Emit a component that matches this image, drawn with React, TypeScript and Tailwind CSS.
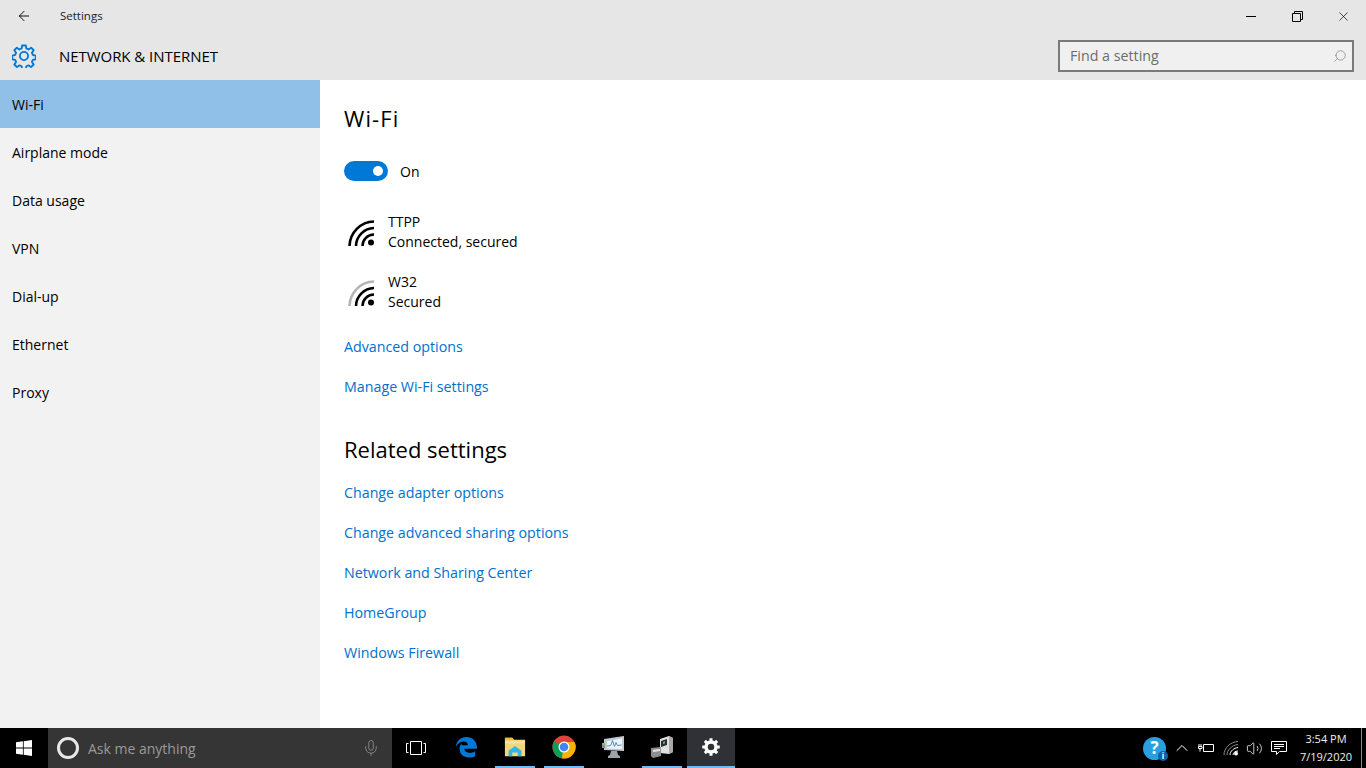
import { ArrowLeft, Mic, Search, X, ChevronUp, Volume2 } from "lucide-react";

const navItems = ["Wi-Fi", "Airplane mode", "Data usage", "VPN", "Dial-up", "Ethernet", "Proxy"];
const relatedLinks = [
  "Change adapter options",
  "Change advanced sharing options",
  "Network and Sharing Center",
  "HomeGroup",
  "Windows Firewall",
];

const FONT = "font-['Open_Sans','Noto_Sans',sans-serif]";

function GearIcon({ className }: { className?: string }) {
  return (
    <svg viewBox="0 0 26 26" className={className} fill="none" stroke="currentColor" strokeWidth="2">
      <circle cx="13" cy="13" r="4.4" />
      <path
        d="M11 1.600h4l.6 3.300 2.300 1 2.800-1.900 2.800 2.800-1.900 2.800 1 2.300 3.200.6v4l-3.200.6-1 2.300 1.900 2.800-2.800 2.800-2.800-1.900-2.300 1-.6 3.200h-4l-.6-3.200-2.300-1-2.800 1.900-2.800-2.800 1.900-2.800-1-2.300-3.200-.6v-4l3.200-.6 1-2.300-1.900-2.800 2.800-2.800 2.800 1.900 2.300-1z"
        strokeLinejoin="round"
      />
    </svg>
  );
}

function WifiIcon({ weak }: { weak?: boolean }) {
  return (
    <svg viewBox="0 0 28 28" className="w-7 h-7 ml-1 mt-1 flex-none" fill="none" strokeWidth="2.600">
      <path d="M1.500 26A25 25 0 0 1 26 1.500" stroke={weak ? "#b5b5b5" : "#000"} />
      <path d="M8 26A18.500 18.500 0 0 1 26 8" stroke="#000" />
      <path d="M14.500 26A11.500 11.500 0 0 1 26 14.500" stroke="#000" />
      <circle cx="23" cy="22.500" r="3" fill="#000" />
    </svg>
  );
}

function WindowsLogo() {
  return (
    <svg viewBox="0 0 16 16" className="w-4 h-4" fill="#fff">
      <path d="M0 2.300 6.900 1.300V7.600H0zM7.700 1.200 16 0V7.600H7.700zM0 8.400H6.900V14.700L0 13.700zM7.700 8.400H16V16L7.700 14.800z" />
    </svg>
  );
}

function EdgeIcon() {
  return (
    <svg viewBox="0 0 24 24" className="w-[22px] h-[24px]" fill="#0078d7">
      <path d="M12.500 1C6 1 1.600 5.600.8 12 3 8 6.500 6 9.600 6c2.600 0 4.400 1.600 4.600 4H7.200C7.400 6.800 5 10.500 5 14c0 6 4.600 9.500 10 9.500 3 0 5.500-.8 7-1.800v-5.200c-1.600 1-3.800 1.800-6 1.800-3 0-5.600-1.300-6-4.300h14V13C24 6 19.500 1 12.500 1z" />
    </svg>
  );
}

function FolderIcon() {
  return (
    <svg viewBox="0 0 24 24" className="w-[22px] h-[22px]">
      <path d="M1 2h8l2 2h12v18H1z" fill="#f6d67a" />
      <path d="M1 2h8l2 2H1z" fill="#e8b93f" />
      <path d="M1 6h22v2H1z" fill="#fbe7a6" />
      <path d="M5 22v-6l7-5 7 5v6h-4v-4H9v4z" fill="#2fb6ea" />
    </svg>
  );
}

function ChromeIcon() {
  return (
    <svg viewBox="0 0 24 24" className="w-6 h-6">
      <circle cx="12" cy="12" r="11.500" fill="#db4437" />
      <path d="M12 12 1.900 6.500A11.500 11.500 0 0 0 10 23.300z" fill="#0f9d58" />
      <path d="M12 7h10.500A11.500 11.500 0 0 1 10 23.300z" fill="#f4b400" />
      <circle cx="12" cy="12" r="5.500" fill="#fff" />
      <circle cx="12" cy="12" r="4.300" fill="#4285f4" />
    </svg>
  );
}

function MonitorIcon() {
  return (
    <svg viewBox="0 0 24 24" className="w-6 h-6">
      <path d="M3 4 23 1v15L3 15z" fill="#c4c9ce" />
      <path d="M6 6l15-2.500V14L6 13.500z" fill="#eef3f6" />
      <path d="M6 11h2l2-1 1.500-4.500 2 6 1.500-4 1.500 3 4-.5" fill="none" stroke="#4a90c8" strokeWidth="1" />
      <path d="M10 16h6l1 4 2 1v2H7v-2l2-1z" fill="#9fa4a8" />
      <path d="M1 8h3v5H1z" fill="#8a8f92" />
      <path d="M1 8h3v2H1z" fill="#7cc36a" />
    </svg>
  );
}

function ServerIcon() {
  return (
    <svg viewBox="0 0 24 24" className="w-6 h-6">
      <path d="M10 4l9-3 4 2v14l-4 2-9-1z" fill="#e0e0e0" />
      <path d="M19 1l4 2v14l-4 2z" fill="#a8a8a8" />
      <path d="M11 6l6-2v6l-6 2z" fill="#2e2e2e" />
      <path d="M13 7l2-.7v2l-2 .7z" fill="#52c46a" />
      <path d="M1 13l10-1v9l-8 2-2-2z" fill="#8f8f8f" />
      <path d="M3 15l7-1v2l-7 1z" fill="#e6e6e6" />
    </svg>
  );
}

function SolidGear() {
  return (
    <svg viewBox="0 0 24 24" className="w-5 h-5" fill="none" stroke="#fff">
      <circle cx="12" cy="12" r="6" strokeWidth="4.200" />
      <path
        d="M12 1.500v4M12 18.500v4M1.500 12h4M18.500 12h4M4.600 4.600l2.800 2.800M16.600 16.600l2.800 2.800M19.400 4.600l-2.800 2.800M7.400 16.600l-2.800 2.800"
        strokeWidth="3.600"
      />
    </svg>
  );
}

function TaskIcon({ active, children }: { active?: boolean; children: React.ReactNode }) {
  return (
    <div className="w-[49px] h-10 flex justify-center">
      <div
        className={`w-10 h-10 flex items-center justify-center border-b-[2px] ${
          active ? "border-[#76b9ed]" : "border-transparent"
        }`}
      >
        {children}
      </div>
    </div>
  );
}

export default function App() {
  return (
    <div className={`w-[1366px] h-[768px] flex flex-col overflow-hidden bg-white text-black ${FONT}`}>
      <div className="h-20 bg-[#e6e6e6] flex flex-col flex-none">
        <div className="h-8 flex items-center">
          <div className="w-12 flex justify-center">
            <ArrowLeft className="w-4 h-4 text-black" strokeWidth={1.4} />
          </div>
          <span className="ml-3 text-[11.500px] text-[#222]">Settings</span>
          <div className="ml-auto flex items-center">
            <div className="w-[46px] flex justify-center">
              <div className="w-[10px] h-px bg-black" />
            </div>
            <div className="w-[46px] flex justify-center">
              <svg viewBox="0 0 11 11" className="w-[11px] h-[11px]" fill="none" stroke="#000">
                <path d="M.5 2.500h8v8h-8zM2.500 2.500v-2h8v8h-2" />
              </svg>
            </div>
            <div className="w-[46px] flex justify-center">
              <X className="w-[15px] h-[15px]" strokeWidth={1.1} />
            </div>
          </div>
        </div>
        <div className="h-12 flex items-center">
          <GearIcon className="ml-3 w-6 h-6 text-[#0078d7]" />
          <span className="ml-[23px] text-[15px] font-medium tracking-[-0.05px] text-black">NETWORK &amp; INTERNET</span>
          <div className="ml-auto mr-3 w-[296px] h-8 border-2 border-[#7a7a7a] bg-[#f0f0f0] flex items-center pl-[10px] pr-[5px]">
            <span className="text-[14.250px] text-[#6d6d6d]">Find a setting</span>
            <Search className="ml-auto w-[14px] h-[14px] -scale-x-100 text-[#777]" strokeWidth={1.1} />
          </div>
        </div>
      </div>

      <div className="flex-1 flex min-h-0">
        <div className="w-80 bg-[#f2f2f2] flex-none">
          {navItems.map((item, i) => (
            <div
              key={item}
              className={`h-12 flex items-center pl-3 text-[14px] ${i === 0 ? "bg-[#90c0e8]" : ""}`}
            >
              {item}
            </div>
          ))}
        </div>

        <div className="flex-1 pl-6 pt-[21px]">
          <h1 className="text-[22px] leading-[34px] font-normal tracking-[1.1px]">Wi-Fi</h1>
          <div className="mt-[26px] flex items-center h-5">
            <div className="w-11 h-5 rounded-full bg-[#0078d7] flex items-center justify-end pr-[5px]">
              <div className="w-[10px] h-[10px] rounded-full bg-white" />
            </div>
            <span className="ml-3 text-[14px]">On</span>
          </div>

          <div className="mt-[31px] h-10 flex items-center text-[14px] leading-5">
            <WifiIcon />
            <div className="ml-3">
              <div>TTPP</div>
              <div>Connected, secured</div>
            </div>
          </div>
          <div className="mt-5 h-10 flex items-center text-[14px] leading-5">
            <WifiIcon weak />
            <div className="ml-3">
              <div>W32</div>
              <div>Secured</div>
            </div>
          </div>

          <div className="mt-[25px] flex flex-col items-start gap-5 text-[14.250px] leading-5 text-[#0071ce]">
            <span>Advanced options</span>
            <span>Manage Wi-Fi settings</span>
          </div>

          <h2 className="mt-[35px] text-[22px] leading-[34px] font-normal">Related settings</h2>
          <div className="mt-[17px] flex flex-col items-start gap-5 text-[14.250px] leading-5 text-[#0071ce]">
            {relatedLinks.map((link) => (
              <span key={link}>{link}</span>
            ))}
          </div>
        </div>
      </div>

      <div className="h-10 bg-black flex items-center flex-none text-white">
        <div className="w-12 flex justify-center">
          <WindowsLogo />
        </div>
        <div className="w-[344px] h-10 bg-[#353535] flex items-center pl-[9px] pr-3">
          <div className="w-[22px] h-[22px] rounded-full border-[3px] border-[#e8e8e8]" />
          <span className="ml-[9px] text-[14px] text-[#9a9a9a]">Ask me anything</span>
          <Mic className="ml-auto w-[18px] h-[18px] text-[#8a8a8a]" strokeWidth={1.2} />
        </div>
        <div className="w-12 mr-px flex justify-center">
          <svg viewBox="0 0 20 14" className="w-5 h-[14px]" fill="none" stroke="#fff">
            <path d="M4.500.500h11v13h-11zM2.500 2.500h-2v9h2M17.500 2.500h2v9h-2" />
          </svg>
        </div>
        <TaskIcon><EdgeIcon /></TaskIcon>
        <TaskIcon active><FolderIcon /></TaskIcon>
        <TaskIcon active><ChromeIcon /></TaskIcon>
        <TaskIcon><MonitorIcon /></TaskIcon>
        <TaskIcon active><ServerIcon /></TaskIcon>
        <div className="ml-px w-12 h-10 flex items-center justify-center bg-[#2f3136] border-b-[2px] border-[#76b9ed]">
          <SolidGear />
        </div>

        <div className="ml-auto flex items-center h-10">
          <div className="relative w-[23px] h-[23px] rounded-full bg-[#2a9fe0] flex items-center justify-center text-[17px] font-bold text-white mr-[6px]">
            ?
            <span className="absolute -right-[2px] -bottom-[1px] w-[10px] h-[10px] rounded-full bg-[#1261b0] text-[8px] leading-[10px] text-center">i</span>
          </div>
          <ChevronUp className="w-5 h-5 text-white" strokeWidth={1.2} />
          <svg viewBox="0 0 16 10" className="ml-[6px] w-4 h-[10px]" fill="none" stroke="#fff">
            <path d="M5.500 1.500h10v7h-10zM3 1v2.500M1 1v2.500M.5 3.500h3.500v2h-3.500zM2 5.500v3" />
          </svg>
          <svg viewBox="0 0 16 16" className="ml-[9px] w-4 h-4" fill="none" stroke="#fff">
            <path d="M1 15C1 8 7 2 15 1.500M4 15c0-5 5-10 11-10.500" stroke="#8a8a8a" />
            <path d="M7 15c0-4 4-7 8-7.500M10 15c0-2 2-4 5-4" />
            <circle cx="13" cy="13.500" r="1.600" fill="#fff" />
          </svg>
          <Volume2 className="ml-[7px] w-[17px] h-[17px] text-white" strokeWidth={1.1} />
          <svg viewBox="0 0 16 16" className="ml-[8px] w-4 h-4" fill="none" stroke="#fff">
            <path d="M.500 1.500h15v10h-7l-3 3v-3h-5zM3 4.500h10M3 6.500h10M3 8.500h6" />
          </svg>
          <div className="w-[70px] text-[11px] leading-[18px] text-center text-[#eee] ml-[4px]">
            <div>3:54 PM</div>
            <div>7/19/2020</div>
          </div>
          <div className="w-[5px] h-10 border-l border-[#888]" />
        </div>
      </div>
    </div>
  );
}
